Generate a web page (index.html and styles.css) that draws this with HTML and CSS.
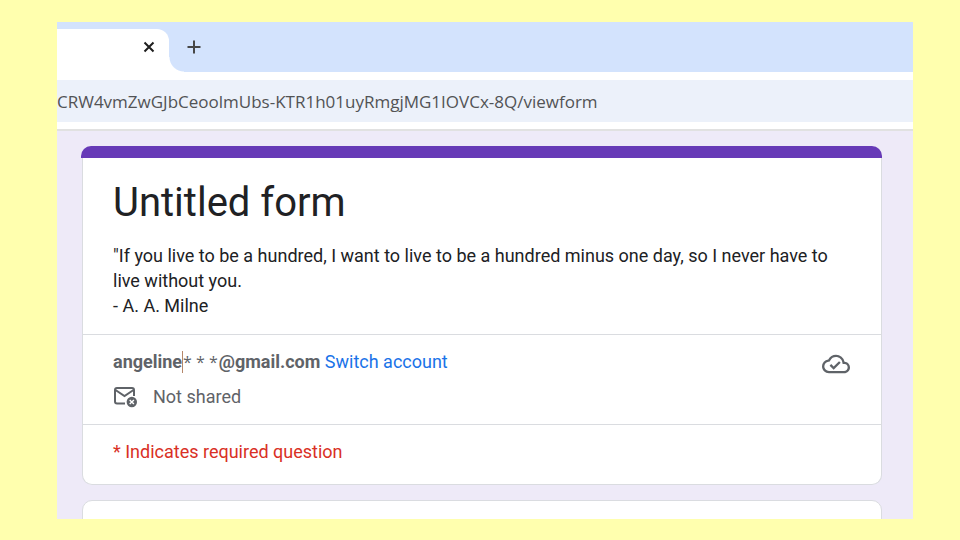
FILE: index.html
```html
<!DOCTYPE html>
<html lang="en">
<head>
    <meta charset="UTF-8">
    <meta name="viewport" content="width=device-width, initial-scale=1.0">
    <title>Untitled form</title>
    <link rel="stylesheet" href="styles.css">
</head>
<body>
    <div class="browser">
        <div class="tab-strip">
            <div class="tab">
                <button class="tab-button" type="button" aria-label="Close tab">
                    <svg width="12" height="12" viewBox="0 0 12 12"><path d="M1.5 1.5l9 9M10.5 1.5l-9 9" stroke="#1f1f1f" stroke-width="2"/></svg>
                </button>
            </div>
            <div class="tab-curve"></div>
            <button class="tab-button new-tab" type="button" aria-label="New tab">
                <svg width="14" height="14" viewBox="0 0 14 14"><path d="M7 .5v13M.5 7h13" stroke="#474747" stroke-width="2"/></svg>
            </button>
        </div>

        <div class="toolbar">
            <div class="address">CRW4vmZwGJbCeoolmUbs-KTR1h01uyRmgjMG1IOVCx-8Q/viewform</div>
        </div>

        <main class="page">
            <section class="card card-header">
                <div class="intro">
                    <h1>Untitled form</h1>
                    <p>"If you live to be a hundred, I want to live to be a hundred minus one day, so I never have to live without you.<br>- A. A. Milne</p>
                </div>
                <div class="account">
                    <div class="account-info">
                        <div class="account-line"><b>angeline</b><span class="mask">* * *</span><b>@gmail.com</b> <a href="#">Switch account</a></div>
                        <div class="shared">
                            <svg width="26" height="24" viewBox="0 0 26 24" fill="none" stroke="#5f6368" stroke-width="2">
                                <path d="M12 18.5H4Q2 18.500 2 16.500V5Q2 3 4 3H19Q21 3 21 5V11"/>
                                <path d="M2.500 5l9 6 9-6"/>
                                <circle cx="18.800" cy="17" r="5.200" fill="#5f6368" stroke="none"/>
                                <path d="M16.700 14.900l4.200 4.200M20.900 14.900l-4.200 4.200" stroke="#fff" stroke-width="1.400"/>
                            </svg>
                            <span>Not shared</span>
                        </div>
                    </div>
                    <svg class="cloud" width="28" height="30" viewBox="0 0 24 24" fill="#5f6368">
                        <path d="M19.350 10.040A7.490 7.490 0 0 0 12 4C9.110 4 6.600 5.640 5.350 8.040A5.994 5.994 0 0 0 0 14c0 3.310 2.690 6 6 6h13c2.760 0 5-2.240 5-5 0-2.640-2.050-4.780-4.650-4.960zM19 18H6c-2.210 0-4-1.790-4-4 0-2.050 1.530-3.760 3.560-3.970l1.070-.11.500-.950A5.469 5.469 0 0 1 12 6c2.620 0 4.880 1.860 5.390 4.430l.3 1.500 1.530.110A2.980 2.980 0 0 1 22 15c0 1.650-1.350 3-3 3zm-9-3.820l-2.090-2.090L6.500 13.500 10 17l6.010-6.010-1.410-1.410z"/>
                    </svg>
                </div>
                <div class="required">* Indicates required question</div>
            </section>
            <section class="card card-question"></section>
        </main>
    </div>
</body>
</html>
```
FILE: styles.css
```css
* {
    box-sizing: border-box;
}

body {
    margin: 0;
    height: 100vh;
    padding: 22px 47px 21px 57px;
    background: #ffffae;
    color: #202124;
    font-family: Roboto, Arial, sans-serif;
    font-size: 18px;
    line-height: 25px;
}

.browser {
    display: flex;
    flex-direction: column;
    height: 100%;
    overflow: hidden;
    background: #fff;
}

/* tabs */
.tab-strip {
    display: flex;
    flex-shrink: 0;
    height: 50px;
    padding-top: 7px;
    background: #d3e3fd;
}

.tab {
    display: flex;
    justify-content: flex-end;
    width: 112px;
    padding: 8px 10px;
    background: #fff;
    border-radius: 0 12px 0 0;
}

.tab-button {
    display: flex;
    align-items: center;
    justify-content: center;
    width: 20px;
    height: 20px;
    padding: 0;
    border: none;
    background: none;
    cursor: pointer;
}

/* white flare where the tab meets the toolbar */
.tab-curve {
    align-self: flex-end;
    width: 15px;
    height: 15px;
    background: radial-gradient(circle at 100% 0, #d3e3fd 14px, #fff 15px);
}

.new-tab {
    margin-top: 8px;
}

/* address bar */
.toolbar {
    flex-shrink: 0;
    padding: 8px 0 7px;
    border-bottom: 2px solid #e1e1e1;
}

.address {
    height: 42px;
    overflow: hidden;
    background: #ecf1fa;
    color: #525355;
    font-family: "Segoe UI", "Open Sans", sans-serif;
    font-size: 17px;
    line-height: 43px;
    white-space: nowrap;
}

/* form */
.page {
    display: flex;
    flex: 1;
    flex-direction: column;
    gap: 15px;
    min-height: 0;
    padding: 15px 31px 0 25px;
    background: #eeeaf8;
}

.card {
    flex-shrink: 0;
    background: #fff;
    border: 1px solid #dadce0;
    border-radius: 10px;
}

.card-header {
    border-top: 0;
}

/* purple bar, covers the card's side borders */
.card-header::before {
    content: "";
    display: block;
    height: 12px;
    margin: 0 -1px 0 -2px;
    border-radius: 10px 10px 0 0;
    background: #673ab7;
}

.card-question {
    height: 120px;
}

.intro {
    padding: 20px 30px 16px;
}

h1 {
    margin: 0 0 15px;
    font-size: 40px;
    font-weight: 400;
    line-height: 50px;
}

p {
    margin: 0;
}

.account {
    display: flex;
    justify-content: space-between;
    padding: 14px 31px 15px 30px;
    border-top: 1px solid #dadce0;
    border-bottom: 1px solid #dadce0;
    color: #5f6368;
}

b {
    font-weight: 700;
}

.mask {
    padding-right: 1px;
    border-left: 1px solid #b5876a;
    font-family: "Segoe UI", "Open Sans", sans-serif;
    font-size: 16px;
    line-height: 1;
}

a {
    color: #1a73e8;
    text-decoration: none;
}

.shared {
    display: flex;
    align-items: center;
    gap: 14px;
    margin-top: 10px;
}

.required {
    padding: 14px 30px 20px;
    color: #d93025;
}
```
